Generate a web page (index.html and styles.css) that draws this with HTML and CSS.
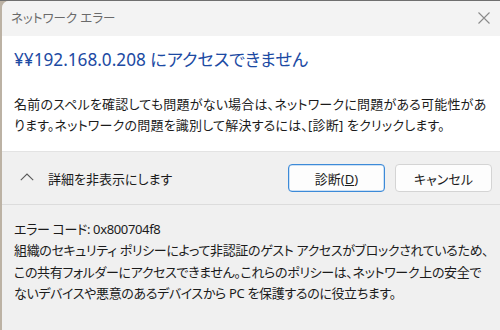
FILE: index.html
```html
<!DOCTYPE html>
<html lang="ja">
  <head>
    <meta charset="UTF-8" />
    <title>ネットワーク エラー</title>
    <link rel="stylesheet" href="styles.css">
  </head>
  <body>
    <div class="window">
      <div class="titlebar">
        <span class="title">ネットワーク エラー</span>
        <svg class="close" width="12" height="12" viewBox="0 0 12 12">
          <path d="M0.5 0.5 L11.5 11.5 M11.5 0.5 L0.5 11.5" stroke="#8a8a8a" stroke-width="1.1" fill="none" />
        </svg>
      </div>

      <div class="content">
        <h1>¥¥192.168.0.208 にアクセスできません</h1>
        <p class="message">名前のスペルを確認しても問題がない場合は、ネットワークに問題がある可能性があ<br>ります。ネットワークの問題を識別して解決するには、[診断] をクリックします。</p>
      </div>

      <div class="actions">
        <div class="toggle">
          <svg width="14" height="8" viewBox="0 0 14 8">
            <path d="M0.8 7.2 L7 1 L13.2 7.2" stroke="#5a5a5a" stroke-width="1.1" fill="none" />
          </svg>
          <span>詳細を非表示にします</span>
        </div>
        <div class="buttons">
          <button class="btn btn-primary">診断(<u>D</u>)</button>
          <button class="btn">キャンセル</button>
        </div>
      </div>

      <div class="details">
        <p>エラー コード: 0x800704f8<br>組織のセキュリティ ポリシーによって非認証のゲスト アクセスがブロックされているため、<br>この共有フォルダーにアクセスできません。これらのポリシーは、ネットワーク上の安全で<br>ないデバイスや悪意のあるデバイスから PC を保護するのに役立ちます。</p>
      </div>
    </div>
  </body>
</html>
```

FILE: styles.css
```css
* {
  margin: 0;
  padding: 0;
  box-sizing: border-box;
}

body {
  font-family: "Noto Sans", "Noto Sans CJK JP", sans-serif;
  font-feature-settings: "palt";
  background: #bcb2a4;
  border-top: 1px solid #6f6f6f;
  width: 500px;
  height: 330px;
  overflow: hidden;
  color: #1b1b1b;
}

.window {
  margin-left: 2px;
  height: 329px;
  background: #f0f0f0;
  border-top-left-radius: 7px;
  overflow: hidden;
  display: flex;
  flex-direction: column;
}

.titlebar {
  height: 35px;
  background: #f3f3f3;
  display: flex;
  align-items: center;
  justify-content: space-between;
  padding: 0 10px 2px 9px;
}

.title {
  font-size: 12.5px;
  color: #6a6a6a;
}

.content {
  background: #ffffff;
  padding: 12px 0 15px 12px;
  border-bottom: 1px solid #e3e3e3;
}

.content h1 {
  font-size: 17.2px;
  font-weight: 400;
  line-height: 24px;
  color: #1c4aa3;
  margin-bottom: 22px;
}

.message {
  font-size: 13px;
  line-height: 21px;
  letter-spacing: 0.2px;
  white-space: nowrap;
}

.actions {
  height: 53px;
  display: flex;
  align-items: center;
  justify-content: space-between;
  padding: 0 8px 0 18px;
  border-bottom: 1px solid #dcdcdc;
}

.toggle {
  display: flex;
  align-items: center;
  gap: 14px;
  font-size: 13px;
}

.toggle svg {
  margin-bottom: 2px;
}

.buttons {
  display: flex;
  gap: 10px;
}

.btn {
  width: 97px;
  height: 28px;
  background: #fdfdfd;
  border: 1px solid #d4d4d4;
  border-radius: 4px;
  font-family: inherit;
  font-feature-settings: "palt";
  font-size: 13px;
  color: #1b1b1b;
}

.btn-primary {
  border-color: #3c8ad8;
  box-shadow: inset 0 0 0 0.5px #9cc4ec;
}

.details {
  flex: 1;
  padding: 14px 0 0 12px;
}

.details p {
  font-size: 13px;
  line-height: 21.4px;
  letter-spacing: -0.35px;
  white-space: nowrap;
}
```
